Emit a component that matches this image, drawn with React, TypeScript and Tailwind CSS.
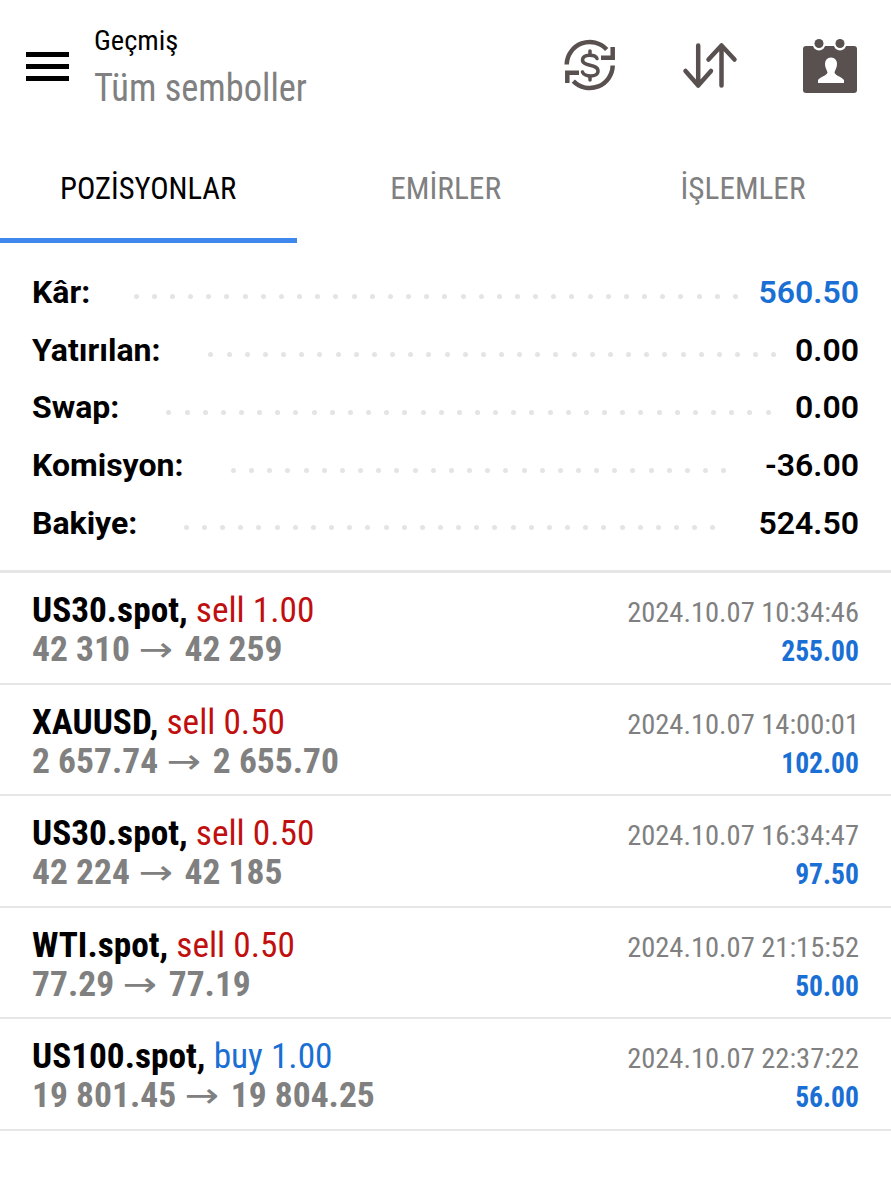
const summary = [
  { label: "Kâr:", value: "560.50", blue: true, left: 43.5, right: 20.5 },
  { label: "Yatırılan:", value: "0.00", left: 48, right: 18.5 },
  { label: "Swap:", value: "0.00", left: 47, right: 24.5 },
  { label: "Komisyon:", value: "-36.00", left: 47.5, right: 21 },
  { label: "Bakiye:", value: "524.50", left: 46.5, right: 25.5 },
];

const trades = [
  { sym: "US30.spot,", side: "sell 1.00", buy: false, from: "42 310", to: "42 259", time: "2024.10.07 10:34:46", profit: "255.00" },
  { sym: "XAUUSD,", side: "sell 0.50", buy: false, from: "2 657.74", to: "2 655.70", time: "2024.10.07 14:00:01", profit: "102.00" },
  { sym: "US30.spot,", side: "sell 0.50", buy: false, from: "42 224", to: "42 185", time: "2024.10.07 16:34:47", profit: "97.50" },
  { sym: "WTI.spot,", side: "sell 0.50", buy: false, from: "77.29", to: "77.19", time: "2024.10.07 21:15:52", profit: "50.00" },
  { sym: "US100.spot,", side: "buy 1.00", buy: true, from: "19 801.45", to: "19 804.25", time: "2024.10.07 22:37:22", profit: "56.00" },
];

const dots = Array.from({ length: 40 }, (_, i) => i);

function App() {
  return (
    <div className="w-[891px] h-[1200px] bg-white font-['Roboto',sans-serif] [font-stretch:75%] overflow-hidden">
      {/* Header */}
      <header className="h-[130px] flex items-start">
        <div className="w-[26px]" />
        <div className="w-[43px] mt-[52px] flex flex-col gap-[7.500px]">
          <div className="h-[4.500px] bg-black" />
          <div className="h-[4.500px] bg-black" />
          <div className="h-[4.500px] bg-black" />
        </div>
        <div className="ml-[25px] mt-[24px] flex-1">
          <div className="text-[28.500px] leading-[34px] text-black">Geçmiş</div>
          <div className="mt-[7px] text-[39px] leading-[46px] text-[#808080] origin-left scale-x-[0.934]">Tüm semboller</div>
        </div>
        <div className="mt-[37px] mr-[33px] flex items-center gap-[64px]">
          <svg width="56" height="56" viewBox="0 0 56 56" fill="none" stroke="#595050" strokeWidth="4.500">
            <path d="M4.700 27.500 A23 23 0 0 1 44.700 12.500" />
            <path d="M50.700 28.500 A23 23 0 0 1 11.300 44.200" />
            <path d="M50.700 10 V20.800 H39" />
            <path d="M5.300 46 V35.700 H17" />
            <path d="M35 21.500 C33.500 17.500 21 16.500 20.500 23 C20.500 30 36 26.500 36 34 C36 41 22 40 20.500 35" strokeWidth="3.500" strokeLinecap="round" />
            <path d="M28 14 V17 M28 40 V43" strokeWidth="3.500" strokeLinecap="round" />
          </svg>
          <svg width="56" height="56" viewBox="0 0 56 56" fill="none" stroke="#595050" strokeWidth="4.500" strokeLinecap="round" strokeLinejoin="round">
            <path d="M16.200 8.500 V48.500 M3.500 34 L16.200 48.500 L29 34" />
            <path d="M39.500 48.500 V8.500 M26.500 22.500 L39.500 8.500 L52.500 22.500" />
          </svg>
          <svg width="56" height="56" viewBox="0 0 56 56" className="overflow-visible">
            <path d="M4 9 H52 Q55 9 55 12 V53 Q55 56 52 56 H4 Q1 56 1 53 V12 Q1 9 4 9 Z" fill="#595050" />
            <circle cx="17" cy="7" r="6.500" fill="#fff" />
            <circle cx="38" cy="7" r="6.500" fill="#fff" />
            <circle cx="17" cy="6.500" r="4.500" fill="#595050" />
            <circle cx="38" cy="6.500" r="4.500" fill="#595050" />
            <path d="M29 20.500 C33 20.500 35 23.500 35 27 C35 31 33 33 32.500 35.500 C33 38.500 40 40 42 43 V46 H16 V43 C18 40 25 38.500 25.500 35.500 C25 33 23 31 23 27 C23 23.500 25 20.500 29 20.500 Z" fill="#fff" />
          </svg>
        </div>
      </header>

      {/* Tabs */}
      <nav className="h-[113px] flex">
        <div className="w-[297px] flex flex-col">
          <div className="flex-1 flex items-center justify-center pt-[8px] text-[32px] text-black">
            <span className="scale-x-[0.956]">POZİSYONLAR</span>
          </div>
          <div className="h-[5px] bg-[#3f87ec]" />
        </div>
        <div className="w-[297px] flex items-center justify-center pt-[3px] text-[32px] text-[#808080]">
          <span className="scale-x-[0.98]">EMİRLER</span>
        </div>
        <div className="w-[297px] flex items-center justify-center pt-[3px] text-[32px] text-[#808080]">
          <span className="scale-x-[0.976]">İŞLEMLER</span>
        </div>
      </nav>

      {/* Summary */}
      <section className="px-[32px] pt-[20px] h-[330px] border-b-[3px] border-[#e6e6e6]">
        {summary.map((row) => (
          <div key={row.label} className="h-[57.750px] flex items-center text-[32px] [font-stretch:100%]">
            <span className="font-bold text-black">{row.label}</span>
            <span
              className="flex-1 mt-[10px] h-[5px] overflow-hidden flex flex-wrap gap-x-[13.170px]"
              style={{ marginLeft: row.left, marginRight: row.right }}
            >
              {dots.map((d) => (
                <span key={d} className="w-[5px] h-[5px] rounded-full bg-[#e4e4e4]" />
              ))}
            </span>
            <span className={row.blue ? "font-semibold text-[#1a6fd4]" : "font-semibold text-black"}>{row.value}</span>
          </div>
        ))}
      </section>

      {/* Trades */}
      {trades.map((t, i) => (
        <article key={i} className="h-[111.500px] px-[32px] border-b-[2px] border-[#e6e6e6] flex justify-between">
          <div className="pt-[18px]">
            <div className="text-[35.300px] leading-[39px]">
              <span className="font-bold text-black">{t.sym} </span>
              <span className={t.buy ? "text-[#1a6fd4]" : "text-[#c00f0f]"}>{t.side}</span>
            </div>
            <div className="h-[39px] flex items-center text-[35.500px] leading-[39px] font-bold text-[#808080]">
              <span>{t.from}</span>
              <span className="ml-[13px] mr-[16px] font-['DejaVu_Sans',sans-serif] text-[34px] leading-[39px] font-normal scale-x-[1.35]">→</span>
              <span>{t.to}</span>
            </div>
          </div>
          <div className="pt-[23px] text-right">
            <div className="text-[28.500px] leading-[34px] text-[#808080]">{t.time}</div>
            <div className="mt-[4px] text-[29px] leading-[34px] font-bold text-[#1a6fd4] origin-right scale-x-[0.95]">{t.profit}</div>
          </div>
        </article>
      ))}
    </div>
  );
}

export default App;
